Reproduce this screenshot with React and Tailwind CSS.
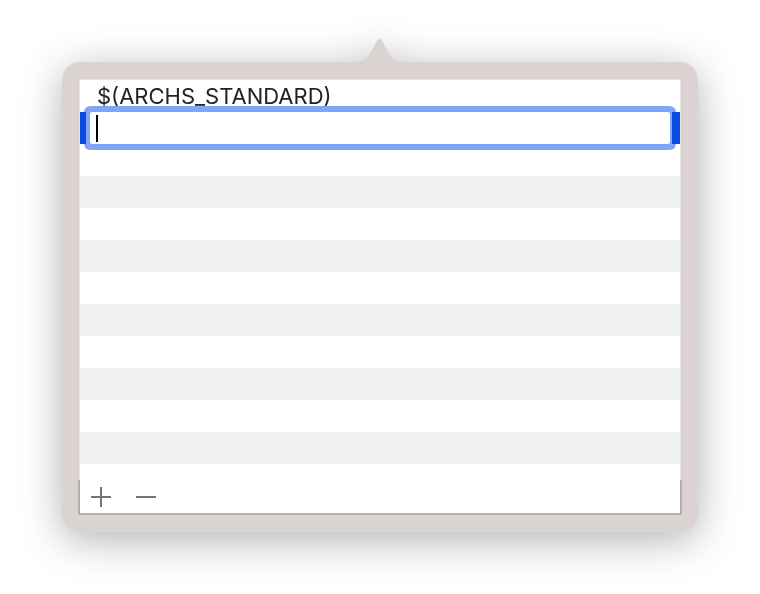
import React from "react"

const ROWS = 13

function Plus() {
  return (
    <svg width="22" height="22" viewBox="0 0 22 22">
      <path d="M11 1v20M1 11h20" stroke="#747474" strokeWidth="2" />
    </svg>
  )
}

function Minus() {
  return (
    <svg width="22" height="22" viewBox="0 0 22 22">
      <path d="M1 11h20" stroke="#747474" strokeWidth="2" />
    </svg>
  )
}

export default function App() {
  return (
    <div className="w-full h-[594px] bg-white flex justify-center pt-[37px] font-['Inter','Liberation_Sans',sans-serif]">
      <div className="w-[636px] flex flex-col items-center drop-shadow-[0_8px_20px_rgba(0,0,0,0.3)]">
        {/* popover arrow */}
        <svg width="56" height="26" viewBox="0 0 56 26" className="-mb-px block">
          <path
            d="M0 26 C9 26 13 23 17 18 L25.5 3 Q27.5 0 29.5 3 L38 18 C42 23 46 26 56 26 Z"
            fill="#dbd3d2"
          />
        </svg>

        <div className="w-full bg-[#dbd3d2] rounded-[18px] p-[17px] flex flex-col">
          <div className="h-[401px] border-t border-x border-[#e4e4e4] bg-white overflow-hidden">
            {Array.from({ length: ROWS }).map((_, i) => {
              const stripe = i % 2 === 1 ? "bg-[#eff1f0]" : "bg-white"
              if (i === 0) {
                return (
                  <div key={i} className={`h-8 flex items-center pl-[17px] text-[22px] leading-8 text-[#222222] ${stripe}`}>
                    $(ARCHS_STANDARD)
                  </div>
                )
              }
              if (i === 1) {
                return (
                  <div key={i} className="relative h-8 bg-white z-10 flex">
                    <div className="mx-[10px] flex-1 bg-white rounded-[2px] ring-[6px] ring-[#80a5f6] flex items-center pl-[6px]">
                      <span className="w-[1.5px] h-[27px] bg-black" />
                    </div>
                    <span className="absolute left-0 top-0 bottom-0 w-[6px] bg-[#0a4ade]" />
                    <span className="absolute right-0 top-0 bottom-0 w-[8px] bg-[#0a4ade]" />
                  </div>
                )
              }
              return <div key={i} className={`h-8 ${stripe}`} />
            })}
          </div>

          <div className="-mx-px h-[35px] bg-white border-x-2 border-b-2 border-[#b1b1b1] flex items-center pl-[10px] gap-[23px]">
            <button className="w-[22px] h-[22px] flex items-center justify-center">
              <Plus />
            </button>
            <button className="w-[22px] h-[22px] flex items-center justify-center">
              <Minus />
            </button>
          </div>
        </div>
      </div>
    </div>
  )
}
